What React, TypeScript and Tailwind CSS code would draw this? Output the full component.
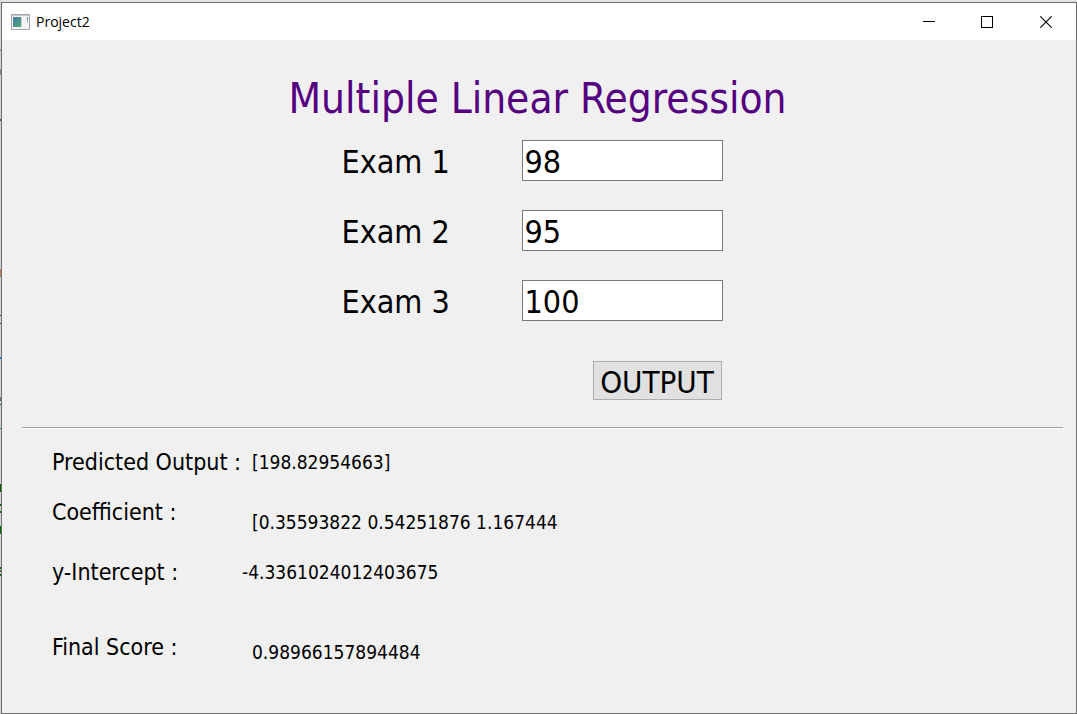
import { useState } from "react";

const inputs = [
  { id: "exam1", label: "Exam 1", initial: "98" },
  { id: "exam2", label: "Exam 2", initial: "95" },
  { id: "exam3", label: "Exam 3", initial: "100" },
];

const marks = [
  { y: 49, h: 2, c: "#9a9a9a" },
  { y: 69, h: 6, c: "#8a8a8a" },
  { y: 119, h: 2, c: "#0a7a0a" },
  { y: 269, h: 8, c: "#b08060" },
  { y: 315, h: 1, c: "#005060" },
  { y: 323, h: 1, c: "#005060" },
  { y: 357, h: 2, c: "#0088bb" },
  { y: 397, h: 4, c: "#607080" },
  { y: 404, h: 1, c: "#006070" },
  { y: 428, h: 1, c: "#0088bb" },
  { y: 484, h: 8, c: "#006400" },
  { y: 504, h: 2, c: "#006400" },
  { y: 511, h: 2, c: "#006400" },
  { y: 526, h: 8, c: "#006400" },
  { y: 567, h: 2, c: "#006400" },
  { y: 570, h: 2, c: "#506050" },
  { y: 574, h: 2, c: "#006400" },
];

function AppIcon() {
  return (
    <svg width="19" height="16" viewBox="0 0 19 16" aria-hidden="true">
      <defs>
        <linearGradient id="pane" x1="0" y1="0" x2="1" y2="1">
          <stop offset="0" stopColor="#4679a5" />
          <stop offset="1" stopColor="#58a878" />
        </linearGradient>
        <linearGradient id="side" x1="0" y1="0" x2="0" y2="1">
          <stop offset="0" stopColor="#4f8fa0" />
          <stop offset="1" stopColor="#b8dcc0" />
        </linearGradient>
      </defs>
      <rect x="0.5" y="0.5" width="18" height="15" fill="#f4f4f6" stroke="#a5a8b0" />
      <rect x="1" y="1" width="17" height="1" fill="#c4c6cc" />
      <rect x="2" y="3" width="8" height="10" fill="url(#pane)" />
      <rect x="10" y="3" width="1" height="11" fill="#cfd2d8" />
      <rect x="16" y="3" width="1" height="6" fill="url(#side)" />
    </svg>
  );
}

function TitleBar() {
  return (
    <header className="flex h-[37px] items-center bg-white pl-[9px]">
      <AppIcon />
      <span className="ml-[6px] flex-1 font-['Open_Sans','Noto_Sans',sans-serif] text-[14px] leading-5">
        Project2
      </span>
      <button type="button" aria-label="Minimize" className="flex h-full w-[58px] items-center justify-center">
        <svg width="12" height="12" viewBox="0 0 12 12" shapeRendering="crispEdges">
          <path d="M0 5.5H12" stroke="#000" />
        </svg>
      </button>
      <button type="button" aria-label="Maximize" className="flex h-full w-[58px] items-center justify-center">
        <svg width="12" height="12" viewBox="0 0 12 12" shapeRendering="crispEdges">
          <rect x="0.5" y="0.5" width="11" height="11" fill="none" stroke="#000" />
        </svg>
      </button>
      <button type="button" aria-label="Close" className="flex h-full w-[60px] items-center justify-center">
        <svg width="12" height="12" viewBox="0 0 12 12">
          <path d="M0.3 0.3L11.7 11.7M11.7 0.3L0.3 11.7" stroke="#000" strokeWidth="1.1" />
        </svg>
      </button>
    </header>
  );
}

export default function App() {
  const [values, setValues] = useState(inputs.map((i) => i.initial));

  return (
    <div className="flex min-h-screen bg-[#e3e3e3] pt-[2px] font-['DejaVu_Sans_Condensed','DejaVu_Sans',sans-serif] text-black">
      <svg className="-mt-[2px] w-px shrink-0" height="714" aria-hidden="true">
        <rect width="1" height="714" fill="#d4d4d4" />
        {marks.map((m) => (
          <rect key={m.y} y={m.y} width="1" height={m.h} fill={m.c} />
        ))}
      </svg>
      <div className="flex min-w-0 flex-1 flex-col border border-[#6e6e6e] bg-[#f0f0f0]">
        <TitleBar />
        <main className="flex-1 pt-[33px]">
          <h1 className="pr-[3px] text-center text-[42px] leading-[52px] text-[#550080]">
            Multiple Linear Regression
          </h1>
          <form className="flex flex-col items-center pt-[15px] pr-[14px]" onSubmit={(e) => e.preventDefault()}>
            <div className="flex flex-col gap-[29px]">
              {inputs.map((field, i) => (
                <div key={field.id} className="flex items-center">
                  <label htmlFor={field.id} className="w-[180px] pt-1 text-[32px] leading-[37px]">
                    {field.label}
                  </label>
                  <input
                    id={field.id}
                    value={values[i]}
                    onChange={(e) => setValues(values.map((v, j) => (j === i ? e.target.value : v)))}
                    className="h-[41px] w-[201px] border border-[#7a7a7a] bg-white px-[2px] pt-[2px] text-[32px] outline-none"
                  />
                </div>
              ))}
              <button
                type="submit"
                className="mt-[11px] mr-px h-[39px] w-[129px] self-end border border-[#adadad] bg-[#e1e1e1] pt-[2px] text-[31px] leading-8"
              >
                OUTPUT
              </button>
            </div>
          </form>
          <hr className="mt-[27px] mr-[13px] ml-5 h-[2px] border-t border-b border-t-[#a0a0a0] border-b-white" />
          <dl className="px-[50px] pt-[18px] text-[19px] leading-[30px]">
            <div className="flex">
              <dt className="w-[200px] whitespace-nowrap text-[23px]">Predicted Output :</dt>
              <dd>[198.82954663]</dd>
            </div>
            <div className="mt-5 flex h-10">
              <dt className="w-[200px] text-[23px]">Coefficient :</dt>
              <dd className="self-end">[0.35593822 0.54251876 1.167444</dd>
            </div>
            <div className="mt-5 flex">
              <dt className="w-[190px] text-[23px]">y-Intercept :</dt>
              <dd>-4.3361024012403675</dd>
            </div>
            <div className="mt-[45px] flex h-[35px]">
              <dt className="w-[200px] text-[23px]">Final Score :</dt>
              <dd className="self-end">0.98966157894484</dd>
            </div>
          </dl>
        </main>
      </div>
    </div>
  );
}
